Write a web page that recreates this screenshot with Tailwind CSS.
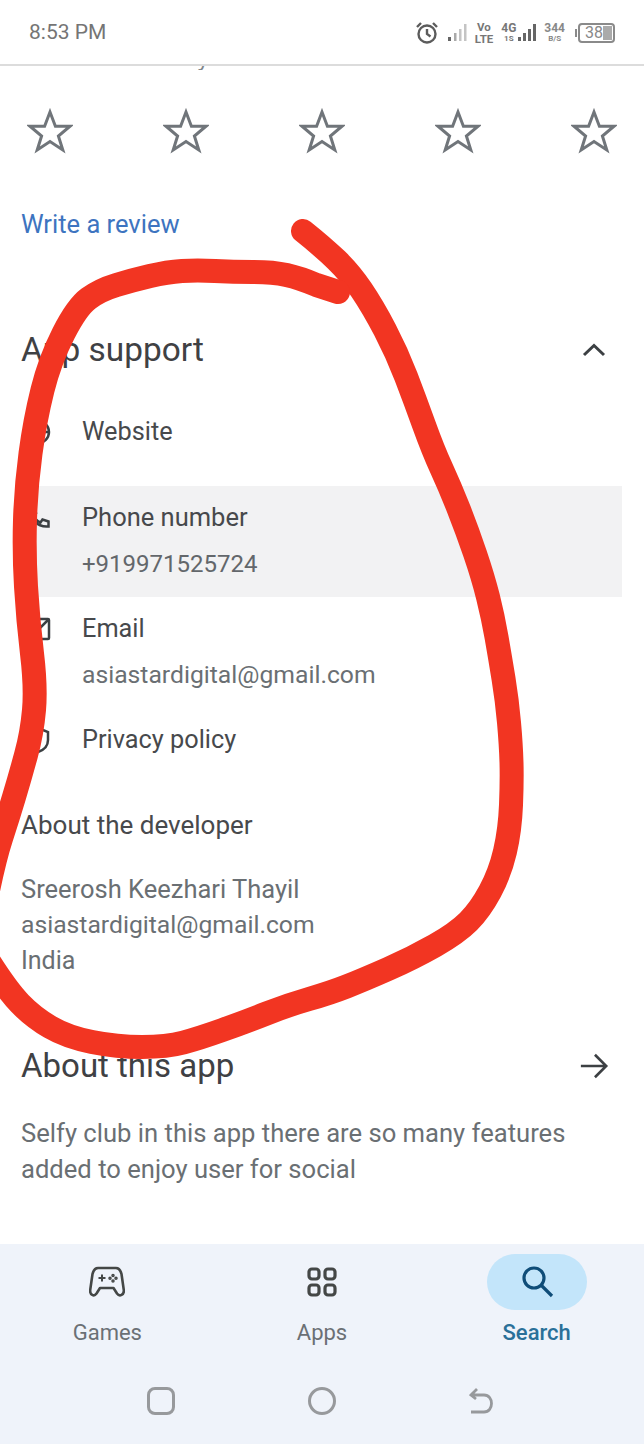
<!DOCTYPE html>
<html lang="en">
<head>
  <meta charset="UTF-8" />
  <meta name="viewport" content="width=device-width, initial-scale=1.0" />
  <title>App support</title>
  <script src="https://cdn.jsdelivr.net/npm/@tailwindcss/browser@4"></script>
</head>
<body class="bg-white font-['Roboto',sans-serif] text-[#47494c]">
  <div class="relative w-[644px] h-[1444px] overflow-hidden flex flex-col">

    <!-- status bar -->
    <div class="h-[66px] shrink-0 border-b-2 border-[#dcdcdc] flex items-center justify-between pl-[29px] pr-[29px] pt-[2px] text-[#757575]">
      <span class="text-[21px]">8:53 PM</span>
      <div class="flex items-center">
        <svg class="w-[24px] h-[24px]" viewBox="0 0 24 24" fill="none" stroke="#5c5c5c" stroke-width="2.4"><circle cx="12" cy="13" r="8.500"/><path d="M12 8V13l3.500 2.500M2 6 6 2M22 6 18 2"/></svg>
        <svg class="w-[21px] h-[20px] ml-[8px]" viewBox="0 0 21 20"><rect x="1" y="14" width="3" height="4" fill="#666"/><rect x="7" y="10" width="2.500" height="8" fill="#aaa"/><rect x="12" y="6" width="2.500" height="12" fill="#c4c4c4"/><rect x="17" y="1" width="2.500" height="17" fill="#c4c4c4"/></svg>
        <div class="ml-[7px] flex flex-col items-center text-[11.500px] leading-[12px] font-bold text-[#777]"><span>Vo</span><span>LTE</span></div>
        <div class="ml-[8px] flex items-center gap-[1px]">
          <div class="flex flex-col items-center text-[12px] leading-[11px] font-bold text-[#777]"><span>4G</span><span class="text-[8px] leading-[9px]">1S</span></div>
          <svg class="w-[20px] h-[20px]" viewBox="0 0 20 20"><rect x="1" y="14" width="3" height="4" fill="#666"/><rect x="6" y="10" width="3" height="8" fill="#666"/><rect x="11" y="6" width="3" height="12" fill="#666"/><rect x="16" y="1" width="3" height="17" fill="#666"/></svg>
        </div>
        <div class="ml-[7px] flex flex-col items-center text-[12px] leading-[11px] font-bold text-[#888]"><span>344</span><span class="text-[8px] leading-[9px]">B/S</span></div>
        <div class="relative ml-[13px] w-[37px] h-[20px] border-2 border-[#8a8a8a] rounded-[4px] flex items-center pl-[5px] text-[16px] leading-none text-[#888]">38
          <div class="absolute right-[1px] top-[1px] bottom-[1px] w-[9px] bg-[#aaa]"></div>
          <div class="absolute -left-[5px] top-[4px] w-[2px] h-[8px] bg-[#8a8a8a]"></div>
        </div>
      </div>
    </div>

    <!-- scrolled content -->
    <main class="flex-1 flex flex-col overflow-hidden">
      <div class="h-[4px] overflow-hidden shrink-0 pl-[22px]">
        <p class="text-[24px] leading-[24px] -mt-[20px] text-[#80868b]">Tell others what you think</p>
      </div>

      <div class="flex justify-between px-[27px] pt-[38px] shrink-0">
        <svg class="w-[46px] h-[46px]" viewBox="0 0 46 46" fill="none" stroke="#70757a" stroke-width="3"><path d="M23 4 28.400 18.200 43 18.200 31.400 28 35.800 42 23 33.600 10.200 42 14.600 28 3 18.200 17.600 18.200Z"/></svg>
        <svg class="w-[46px] h-[46px]" viewBox="0 0 46 46" fill="none" stroke="#70757a" stroke-width="3"><path d="M23 4 28.400 18.200 43 18.200 31.400 28 35.800 42 23 33.600 10.200 42 14.600 28 3 18.200 17.600 18.200Z"/></svg>
        <svg class="w-[46px] h-[46px]" viewBox="0 0 46 46" fill="none" stroke="#70757a" stroke-width="3"><path d="M23 4 28.400 18.200 43 18.200 31.400 28 35.800 42 23 33.600 10.200 42 14.600 28 3 18.200 17.600 18.200Z"/></svg>
        <svg class="w-[46px] h-[46px]" viewBox="0 0 46 46" fill="none" stroke="#70757a" stroke-width="3"><path d="M23 4 28.400 18.200 43 18.200 31.400 28 35.800 42 23 33.600 10.200 42 14.600 28 3 18.200 17.600 18.200Z"/></svg>
        <svg class="w-[46px] h-[46px]" viewBox="0 0 46 46" fill="none" stroke="#70757a" stroke-width="3"><path d="M23 4 28.400 18.200 43 18.200 31.400 28 35.800 42 23 33.600 10.200 42 14.600 28 3 18.200 17.600 18.200Z"/></svg>
      </div>

      <a class="block pl-[21px] mt-[54px] text-[25.500px] leading-[32px] text-[#3d74c0]">Write a review</a>

      <div class="flex items-center justify-between pl-[21px] pr-[36px] mt-[88px] h-[44px] shrink-0">
        <h2 class="text-[33.400px] leading-[44px] text-[#3f4144]">App support</h2>
        <svg class="w-[28px] h-[28px]" viewBox="0 0 28 28" fill="none" stroke="#3c4043" stroke-width="3"><path d="M4 19 14 9.500 24 19"/></svg>
      </div>

      <!-- support rows -->
      <div class="mt-[42px] w-[622px] pl-[22px] flex flex-col text-[25.300px]">
        <div class="flex items-center h-[36px]">
          <svg class="w-[32px] h-[32px] shrink-0" viewBox="0 0 32 32" fill="none" stroke="#3c4043" stroke-width="2.500"><circle cx="16" cy="16" r="11"/><path d="M5 16h22M16 5c-7 7-7 15 0 22M16 5c7 7 7 15 0 22"/></svg>
          <span class="ml-[28px]">Website</span>
        </div>
        <div class="mt-[36px] h-[111px] bg-[#f2f2f3] pt-[13px] flex">
          <svg class="w-[32px] h-[32px] shrink-0 mt-[2px]" viewBox="0 0 32 32" fill="none" stroke="#3c4043" stroke-width="2.500"><path d="M7 6h5l2 6-3 2c1.500 3.500 4 6 7.500 7.500l2-3 6 2v5c-11 1-20-8-19.500-19.500Z"/></svg>
          <div class="ml-[28px]">
            <p class="leading-[36px] text-[25.500px]">Phone number</p>
            <p class="leading-[36px] mt-[11px] text-[24px] text-[#63676b]">+919971525724</p>
          </div>
        </div>
        <div class="mt-[14px] flex">
          <svg class="w-[32px] h-[32px] shrink-0 mt-[2px]" viewBox="0 0 32 32" fill="none" stroke="#3c4043" stroke-width="2.500"><rect x="5" y="6" width="22" height="20" rx="1"/><path d="m5 8 11 9 11-11"/></svg>
          <div class="ml-[28px]">
            <p class="leading-[36px]">Email</p>
            <p class="leading-[36px] mt-[10px] text-[24.700px] text-[#6a6f73]">asiastardigital@gmail.com</p>
          </div>
        </div>
        <div class="mt-[29px] flex">
          <svg class="w-[32px] h-[32px] shrink-0 mt-[2px]" viewBox="0 0 32 32" fill="none" stroke="#3c4043" stroke-width="2.500"><path d="M16 4 26 8v8c0 6-4 10-10 12-6-2-10-6-10-12V8Z"/></svg>
          <p class="ml-[28px] leading-[36px]">Privacy policy</p>
        </div>
      </div>

      <!-- developer -->
      <div class="pl-[21px] mt-[49px]">
        <h3 class="text-[26px] leading-[36px]">About the developer</h3>
        <div class="mt-[28px] leading-[36px] text-[#6a6f73]">
          <p class="text-[25.500px]">Sreerosh Keezhari Thayil</p>
          <p class="text-[24.700px]">asiastardigital@gmail.com</p>
          <p class="text-[25px]">India</p>
        </div>
      </div>

      <div class="flex items-center justify-between pl-[21px] pr-[35px] mt-[65px] h-[44px] shrink-0">
        <h2 class="text-[33px] leading-[44px] text-[#3f4144]">About this app</h2>
        <svg class="w-[30px] h-[30px]" viewBox="0 0 32 32" fill="none" stroke="#3c4043" stroke-width="2.800"><path d="M2 16h27M17 4l12 12-12 12"/></svg>
      </div>

      <p class="pl-[21px] pr-[60px] mt-[27px] text-[25.600px] leading-[36px] text-[#6a6f73]">Selfy club in this app there are so many features added to enjoy user for social</p>
    </main>

    <!-- bottom nav -->
    <nav class="h-[200px] shrink-0 bg-[#eff3fa] flex flex-col">
      <div class="grid grid-cols-3 pt-[10px] h-[132px]">
        <div class="flex flex-col items-center">
          <div class="h-[56px] w-[100px] flex items-center justify-center">
            <svg class="w-[36px] h-[36px]" viewBox="0 0 36 36" fill="none" stroke="#444746" stroke-width="2.600" stroke-linejoin="round"><path d="M9 4h18c3 0 4.500 2 5.500 6l2.300 16c.5 5-4.300 7-6.800 3.500l-3.500-5.500H11l-3.500 5.500C5 33 .7 31 1.200 26L3.500 10C4.500 6 6 4 9 4Z"/><path d="M9.500 14h7M13 10.500v7" stroke-width="2"/><circle cx="24" cy="11.500" r="1" stroke-width="1.500"/><circle cx="24" cy="17" r="1" stroke-width="1.500"/><circle cx="21" cy="14.200" r="1" stroke-width="1.500"/><circle cx="27" cy="14.200" r="1" stroke-width="1.500"/></svg>
          </div>
          <span class="mt-[8px] text-[22px] leading-[30px] text-[#6b7075]">Games</span>
        </div>
        <div class="flex flex-col items-center">
          <div class="h-[56px] w-[100px] flex items-center justify-center">
            <svg class="w-[32px] h-[32px]" viewBox="0 0 32 32" fill="none" stroke="#444746" stroke-width="3.200"><rect x="3" y="3" width="10" height="10" rx="3"/><rect x="19" y="3" width="10" height="10" rx="3"/><rect x="3" y="19" width="10" height="10" rx="3"/><rect x="19" y="19" width="10" height="10" rx="3"/></svg>
          </div>
          <span class="mt-[8px] text-[22px] leading-[30px] text-[#6b7075]">Apps</span>
        </div>
        <div class="flex flex-col items-center">
          <div class="h-[56px] w-[100px] rounded-[28px] bg-[#c3e5fa] flex items-center justify-center">
            <svg class="w-[36px] h-[36px]" viewBox="0 0 36 36" fill="none" stroke="#0f4d78" stroke-width="3.200"><circle cx="15" cy="14" r="10"/><path d="m22 21 11 11"/></svg>
          </div>
          <span class="mt-[8px] text-[22px] leading-[30px] font-medium text-[#2a7099]">Search</span>
        </div>
      </div>
      <div class="flex justify-center items-center gap-[133px] h-[50px] -ml-[2px]">
        <div class="w-[28px] h-[28px] rounded-[8px] border-[3px] border-[#97999c]"></div>
        <div class="w-[28px] h-[28px] rounded-full border-[3px] border-[#97999c]"></div>
        <svg class="w-[26px] h-[28px]" viewBox="0 0 26 28" fill="none" stroke="#97999c" stroke-width="2.800"><path d="M2 8h13c10 0 10 17 0 17H2M8 2 2 8l5 4"/></svg>
      </div>
    </nav>

    <!-- hand drawn red circle on top of the screenshot -->
    <svg class="absolute left-0 top-0 pointer-events-none" width="644" height="1444" viewBox="0 0 644 1444" fill="none" stroke="#f23522" stroke-width="24" stroke-linecap="round" stroke-linejoin="round">
      <path d="M303 231Q323 247 336.500 260Q350 273 361.500 290Q373 307 385 330Q397 353 406 376.500Q415 400 424 425Q433 450 441.500 468.500Q450 487 458.500 508.500Q467 530 475 553.500Q483 577 488 597Q493 617 496.500 637Q500 657 503.500 678.500Q507 700 509 722.500Q511 745 511.500 762.500Q512 780 511 805Q510 830 505 851.500Q500 873 490 891.500Q480 910 468.500 921.500Q457 933 435 945.500Q413 958 388 969Q363 980 346.500 986.500Q330 993 309 999Q288 1005 266.500 1013.500Q245 1022 222.500 1030Q200 1038 183.500 1042.500Q167 1047 142 1047Q117 1047 92 1042Q67 1037 50 1027Q33 1017 20 1003.500Q7 990 -12 960"/>
      <path d="M-14 900Q-6 860 1 838.500Q8 817 14 797Q20 777 26 755Q32 733 34 710Q36 687 32 653.500Q28 620 26 586.500Q24 553 25 520Q26 487 30.500 453.500Q35 420 42.500 390Q50 360 63.500 333.500Q77 307 88.500 298.500Q100 290 116.500 285Q133 280 150 276Q167 272 182 271Q197 270 215 271Q233 272 253 272Q273 272 286.500 275Q300 278 316.500 285L338 292"/>
    </svg>
  </div>
</body>
</html>
